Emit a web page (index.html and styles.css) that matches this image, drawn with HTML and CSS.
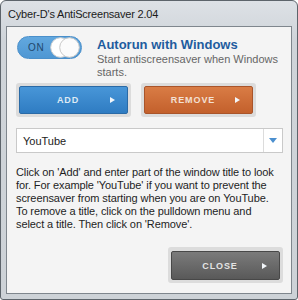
FILE: index.html
```html
<!DOCTYPE html>
<html>
<head>
<meta charset="utf-8">
<link rel="stylesheet" href="styles.css">
</head>
<body>
<div class="window">
  <div class="titlebar">Cyber-D's AntiScreensaver 2.04</div>
  <div class="client">
    <div class="autorun">
      <div class="toggle">
        <span class="toggle-label">ON</span>
        <svg class="knob" width="30" height="21" viewBox="0 0 30 21">
          <circle cx="10.5" cy="10.5" r="9.8" fill="#ffffff" stroke="#cfcfcf" stroke-width="1"/>
          <circle cx="19.5" cy="10.5" r="9.8" fill="#fbfbfb" stroke="#c8c8c8" stroke-width="1"/>
        </svg>
      </div>
      <div class="autorun-text">
        <div class="autorun-title">Autorun with Windows</div>
        <div class="autorun-sub">Start antiscreensaver when Windows starts.</div>
      </div>
    </div>
    <div class="actions">
      <div class="btn-frame"><div class="btn btn-blue"><span class="btn-label">ADD</span><span class="btn-arrow"></span></div></div>
      <div class="btn-frame"><div class="btn btn-orange"><span class="btn-label">REMOVE</span><span class="btn-arrow"></span></div></div>
    </div>
    <div class="select">
      <span class="select-value">YouTube</span>
      <span class="select-toggle"><span class="select-arrow"></span></span>
    </div>
    <p class="help">Click on 'Add' and enter part of the window title to look<br>for. For example 'YouTube' if you want to prevent the<br>screensaver from starting when you are on YouTube.<br>To remove a title, click on the pulldown menu and<br>select a title. Then click on 'Remove'.</p>
    <div class="footer">
      <div class="btn-frame btn-frame-tall"><div class="btn btn-gray"><span class="btn-label">CLOSE</span><span class="btn-arrow"></span></div></div>
    </div>
  </div>
</div>
</body>
</html>
```

FILE: styles.css
```css
html, body {
  margin: 0;
  padding: 0;
  background: #ffffff;
}
body {
  width: 298px;
  height: 300px;
  overflow: hidden;
  font-family: "Liberation Sans", Arial, sans-serif;
}
.window {
  box-sizing: border-box;
  width: 298px;
  height: 300px;
  border: 1px solid #5d646b;
  border-radius: 6px 6px 3px 3px;
  background: linear-gradient(#dde1e6, #cfd4d9 40px, #cdd2d7);
  padding: 0 5px 5px 5px;
  display: flex;
  flex-direction: column;
}
.titlebar {
  height: 25px;
  flex: none;
  display: flex;
  align-items: center;
  padding-left: 2px;
  font-size: 11px;
  letter-spacing: -0.2px;
  color: #1b1b1b;
}
.client {
  flex: 1;
  border: 1px solid #7f868d;
  background: #f4f4f4;
  padding: 9px 8px 10px 9px;
  display: flex;
  flex-direction: column;
  min-height: 0;
}
.autorun {
  display: flex;
  align-items: flex-start;
  gap: 15px;
  padding-left: 1px;
}
.toggle {
  width: 65px;
  height: 23px;
  box-sizing: border-box;
  border-radius: 12px;
  background: linear-gradient(#62a8df, #4f97d3);
  border: 1px solid #4a8fca;
  display: flex;
  align-items: center;
  justify-content: space-between;
  padding: 0 1px 0 10px;
  flex: none;
}
.toggle-label {
  font-size: 10px;
  letter-spacing: 0.8px;
  color: #21476b;
}
.knob {
  display: block;
}
.autorun-text {
  padding-top: 1px;
}
.autorun-title {
  font-size: 13px;
  font-weight: bold;
  color: #1e5c9f;
  line-height: 15px;
}
.autorun-sub {
  font-size: 11px;
  color: #666666;
  line-height: 13px;
  margin-top: 1px;
}
.actions {
  display: flex;
  gap: 10px;
  margin-top: 4px;
}
.btn-frame {
  width: 115px;
  height: 34px;
  box-sizing: border-box;
  padding: 3px;
  background: #dcdcdc;
  border-radius: 3px;
  flex: none;
}
.btn-frame-tall {
  height: 36px;
  padding: 4px 3px 3px 3px;
}
.btn {
  height: 100%;
  box-sizing: border-box;
  border-radius: 2px;
  display: flex;
  align-items: center;
  padding: 0 12px 0 6px;
}
.btn-blue {
  background: linear-gradient(#4896d8, #2f7cc2);
  border: 1px solid #2a6aa6;
}
.btn-orange {
  background: linear-gradient(#d97c45, #c3602c);
  border: 1px solid #a9542a;
}
.btn-gray {
  background: linear-gradient(#7b7b7b, #595959);
  border: 1px solid #484848;
}
.btn-label {
  flex: 1;
  text-align: center;
  font-size: 9px;
  font-weight: bold;
  letter-spacing: 0.9px;
  color: #dfeaf4;
}
.btn-orange .btn-label { color: #f3e0d3; }
.btn-gray .btn-label { color: #e4e4e4; }
.btn-arrow {
  width: 0;
  height: 0;
  border-top: 3.5px solid transparent;
  border-bottom: 3.5px solid transparent;
  border-left: 5px solid #f2f6fa;
}
.select {
  margin-top: 11px;
  height: 25px;
  box-sizing: border-box;
  border: 1px solid #c9c9c9;
  background: #ffffff;
  display: flex;
  align-items: center;
}
.select-value {
  flex: 1;
  padding-left: 6px;
  font-size: 11px;
  color: #222222;
}
.select-toggle {
  width: 18px;
  height: 100%;
  border-left: 1px solid #dcdcdc;
  display: flex;
  align-items: center;
  justify-content: center;
}
.select-arrow {
  width: 0;
  height: 0;
  border-left: 4px solid transparent;
  border-right: 4px solid transparent;
  border-top: 5px solid #4b8fcf;
}
.help {
  margin: 13px 0 0 0;
  font-size: 11px;
  line-height: 13px;
  letter-spacing: -0.1px;
  color: #1e1e1e;
  white-space: nowrap;
}
.footer {
  margin-top: auto;
  display: flex;
  justify-content: flex-end;
}
```
